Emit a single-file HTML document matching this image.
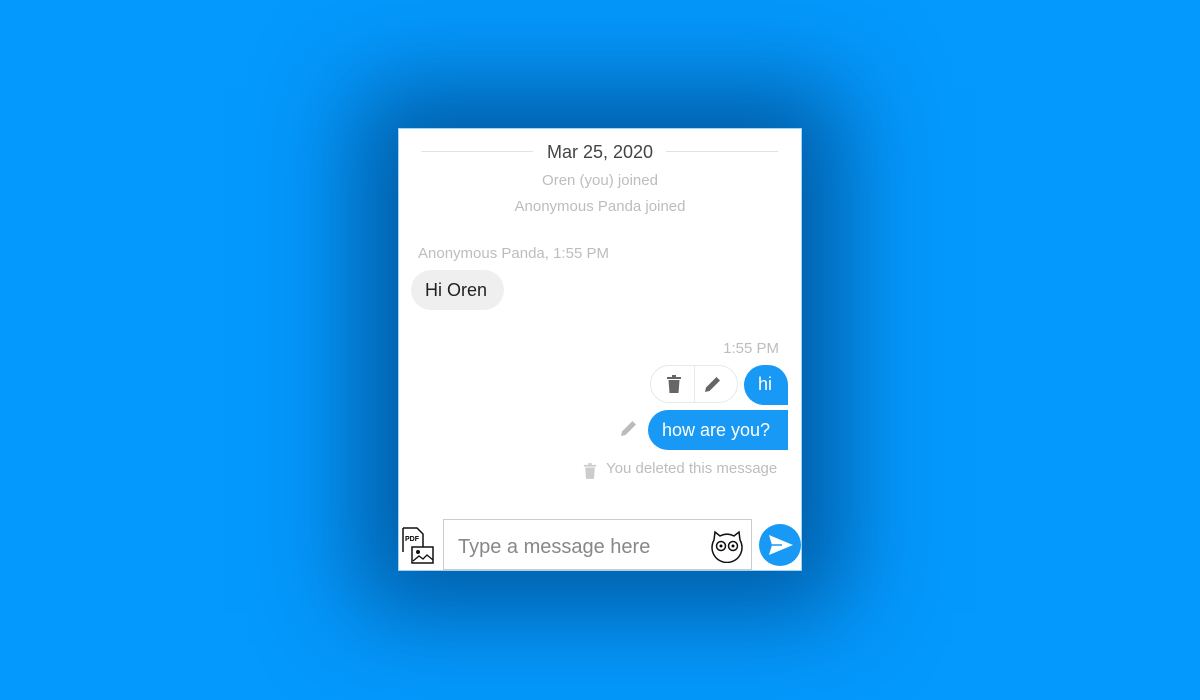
<!DOCTYPE html>
<html><head><meta charset="utf-8"><style>
*{margin:0;padding:0;box-sizing:border-box}
body{width:1200px;height:700px;background:#0499fd;position:relative;overflow:hidden;font-family:"Liberation Sans",sans-serif}
.card{position:absolute;left:398px;top:128px;width:404px;height:443px;background:#fff;border:1px solid #9fd4f7;box-shadow:0 0 90px 40px rgba(0,40,90,.55)}
.a{position:absolute;white-space:nowrap}
.g{color:#bdbdbd;font-size:15px}
.blue{background:#1799f5;color:#fff;font-size:18px}
</style></head><body>
<div class="card">
<div class="a" style="left:22px;top:22px;width:112px;height:1px;background:#e2e2e2"></div>
<div class="a" style="left:267px;top:22px;width:112px;height:1px;background:#e2e2e2"></div>
<div class="a" style="left:0;width:402px;top:13px;text-align:center;font-size:18px;color:#444">Mar 25, 2020</div>
<div class="a g" style="left:0;width:402px;top:43px;text-align:center">Oren (you) joined</div>
<div class="a g" style="left:0;width:402px;top:69px;text-align:center">Anonymous Panda joined</div>
<div class="a g" style="left:19px;top:116px">Anonymous Panda, 1:55 PM</div>
<div class="a" style="left:12px;top:141px;width:93px;height:40px;border-radius:20px;background:#efefef;color:#222;font-size:18px;line-height:40px;padding-left:14px">Hi Oren</div>
<div class="a g" style="right:22px;top:211px">1:55 PM</div>
<div class="a" style="left:251px;top:236px;width:88px;height:38px;border:1px solid #e8e8e8;border-radius:19px">
 <div class="a" style="left:43px;top:0;width:1px;height:36px;background:#e8e8e8"></div>
 <svg class="a" style="left:15px;top:9px" width="16" height="18" viewBox="0 0 16 18"><rect x="1" y="2" width="14" height="2" fill="#666"/><rect x="6" y="0" width="4" height="2" fill="#666"/><path d="M2.5 5h11l-1 13h-9z" fill="#666"/></svg>
 <svg class="a" style="left:53px;top:9px" width="18" height="18" viewBox="0 0 18 18"><path d="M1 17l1-4.5L12.5 2l3.5 3.5L5.5 16z" fill="#666"/></svg>
</div>
<div class="a blue" style="left:345px;top:236px;width:44px;height:40px;border-radius:20px 20px 0 20px;line-height:38px;padding-left:14px">hi</div>
<svg class="a" style="left:221px;top:290px" width="18" height="18" viewBox="0 0 18 18"><path d="M1 17l1-4.5L12.5 2l3.5 3.5L5.5 16z" fill="#bbb"/></svg>
<div class="a blue" style="left:249px;top:281px;width:140px;height:40px;border-radius:20px 0 0 20px;line-height:40px;padding-left:14px">how are you?</div>
<svg class="a" style="left:184px;top:333px" width="14" height="18" viewBox="0 0 16 18"><rect x="1" y="2" width="14" height="2" fill="#ccc"/><rect x="6" y="0" width="4" height="2" fill="#ccc"/><path d="M2.5 5h11l-1 13h-9z" fill="#ccc"/></svg>
<div class="a g" style="left:207px;top:331px">You deleted this message</div>
<svg class="a" style="left:3px;top:398px" width="32" height="38" viewBox="0 0 32 38"><path d="M1 1h14l6 6v13" fill="none" stroke="#111" stroke-width="1.5"/><path d="M1 1v24" stroke="#111" stroke-width="1.5"/><text x="3" y="14" font-size="7" font-weight="bold" font-family="Liberation Sans">PDF</text><rect x="10" y="20" width="21" height="16" fill="#fff" stroke="#111" stroke-width="1.5"/><circle cx="16" cy="25" r="2" fill="#111"/><path d="M11 34l6-5 4 3 4-4 6 5" fill="none" stroke="#111" stroke-width="1.3"/></svg>
<div class="a" style="left:44px;top:390px;width:309px;height:51px;border:1px solid #ccc;font-size:20px;color:#888;line-height:55px;padding-left:14px">Type a message here</div>
<svg class="a" style="left:310px;top:398px" width="36" height="36" viewBox="0 0 36 36"><path d="M6 5l5 4a15 15 0 0 1 14 0l5-4 1 8a15 15 0 1 1-26 0z" fill="#fff" stroke="#111" stroke-width="1.5"/><circle cx="12" cy="19" r="4.5" fill="none" stroke="#111" stroke-width="1.5"/><circle cx="24" cy="19" r="4.5" fill="none" stroke="#111" stroke-width="1.5"/><circle cx="12" cy="19" r="1.5"/><circle cx="24" cy="19" r="1.5"/></svg>
<div class="a" style="left:360px;top:395px;width:42px;height:42px;border-radius:50%;background:#1799f5"></div>
<svg class="a" style="left:369px;top:405px" width="26" height="22" viewBox="0 0 26 22"><path d="M1 1l24 10L1 21l3-10z" fill="#fff"/><path d="M4 11h10" stroke="#1799f5" stroke-width="1.5"/></svg>
</div>
</body></html>
